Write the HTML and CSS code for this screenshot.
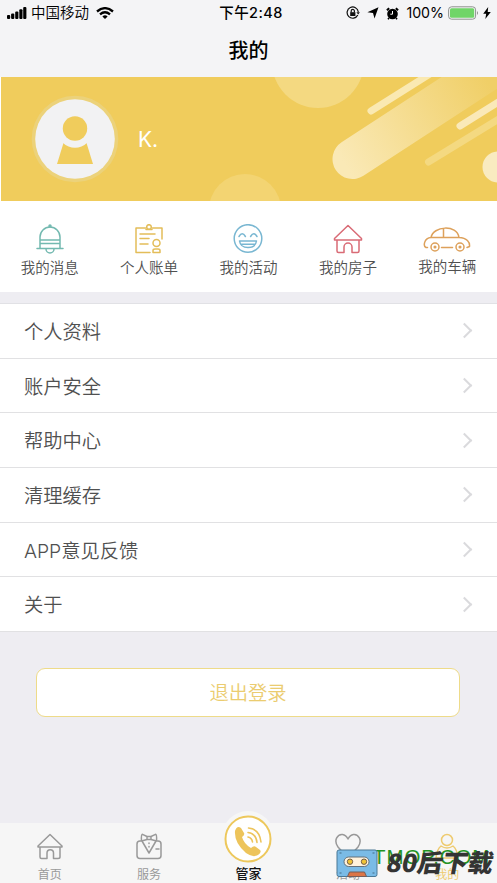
FILE: index.html
```html
<!DOCTYPE html>
<html lang="zh-CN">
<head>
<meta charset="utf-8">
<title>我的</title>
<link rel="stylesheet" href="styles.css">
</head>
<body>
<div class="app">
  <header class="top">
    <div class="status">
      <div class="status-left">
        <svg class="signal" width="20" height="12" viewBox="0 0 20 12"><rect x="0" y="8" width="3.2" height="4" rx="1"/><rect x="4.1" y="6.4" width="3.2" height="5.6" rx="1"/><rect x="8.2" y="4.4" width="3.2" height="7.6" rx="1"/><rect x="12.3" y="2.2" width="3.2" height="9.8" rx="1"/><rect x="16.2" y="0" width="3.2" height="12" rx="1"/></svg>
        <span class="carrier">中国移动</span>
        <svg class="wifi" width="18" height="12" viewBox="0 0 18 12" fill="none" stroke="#000" stroke-width="2.3"><path d="M1 4.500Q9-2.200 17 4.500M4 7.400Q9 3.200 14 7.400"/><path d="M6.400 9.400Q9 7.200 11.600 9.400L9 12Z" fill="#000" stroke="none"/></svg>
      </div>
      <span class="time">下午2:48</span>
      <div class="status-right">
        <svg width="14" height="14" viewBox="0 0 14 14" fill="none" stroke="#111" stroke-width="1.2"><path d="M11.800 9A5.600 5.600 0 1 1 12.300 6"/><path d="M10.400 6.200h3.500l-1.700 2.400z" fill="#111" stroke="none"/><rect x="4.200" y="6.200" width="5.200" height="3.800" fill="#111" stroke="none"/><path d="M5.200 6.500V5a1.600 1.600 0 0 1 3.200 0v1.500"/></svg>
        <svg width="12" height="12" viewBox="0 0 12 12"><path d="M11.500.3L7.500 11.500 6 6 .4 5.200Z"/></svg>
        <svg width="13" height="13" viewBox="0 0 13 13"><circle cx="6.500" cy="7" r="5.300"/><path d="M.9 3.200L3.200 1.200M12.100 3.200L9.800 1.200" stroke="#000" stroke-width="2"/><path d="M3 11l-1 1.300M10 11l1 1.300" stroke="#000" stroke-width="1.600"/><path d="M6.500 4v3.200H4.300" fill="none" stroke="#fff" stroke-width="1"/></svg>
        <span class="percent">100%</span>
        <svg class="battery" width="31" height="14" viewBox="0 0 31 14"><rect x=".6" y=".8" width="27" height="12.400" rx="3" fill="#f4f4f6" stroke="#8e918e"/><rect x="2" y="2.200" width="24.200" height="9.600" rx="1.500" fill="#70d568"/><path d="M29 5q2 2 0 4z" fill="#8e918e"/></svg>
        <svg class="bolt" width="8" height="12" viewBox="0 0 8 12"><path d="M5.200 0L.2 6.700h3L2.300 12 7.800 4.900H4.700Z"/></svg>
      </div>
    </div>
    <h1>我的</h1>
  </header>

  <section class="banner">
    <svg class="banner-art" width="496" height="124" viewBox="1 77 496 124">
      <defs><linearGradient id="beam" gradientUnits="userSpaceOnUse" x1="345" y1="165" x2="487" y2="80"><stop offset="0" stop-color="#fae9b6"/><stop offset="1" stop-color="#f0cf67"/></linearGradient></defs>
      <rect x="1" y="77" width="496" height="124" fill="#f0cc5c"/>
      <circle cx="318" cy="62" r="46" fill="#f4d981"/>
      <circle cx="245" cy="210" r="36" fill="#f3d472"/>
      <path d="M352.500 159L512 55" stroke="url(#beam)" stroke-width="40" stroke-linecap="round"/>
      <g fill="none" stroke-width="7" stroke-linecap="round"><path d="M371 111L433 72" stroke="#fae9b2"/><path d="M460 126L505 98" stroke="#fae9b8"/><path d="M428.500 162L507 114" stroke="#f4d981"/></g>
      <circle cx="498" cy="167" r="15.500" fill="#f9ebc0"/>
    </svg>
    <div class="profile">
      <svg class="avatar" width="88" height="88" viewBox="0 0 88 88"><circle cx="44" cy="44" r="43.300" fill="#ecd27a"/><circle cx="44" cy="44" r="39.800" fill="#f2f2f3"/><path d="M32.500 48H55.500L62 69H26Z" fill="#f0cc5c"/><circle cx="44" cy="36" r="16.800" fill="#f2f2f3"/><circle cx="44" cy="33.500" r="12.200" fill="#f0cc5c"/></svg>
      <span class="name">K.</span>
    </div>
  </section>

  <nav class="shortcuts">
    <a class="shortcut teal"><svg width="28" height="30" viewBox="0 0 28 30"><path d="M4 24V13a10 10 0 0 1 20 0v11M1 24.500h26M4 16h20M4 19.500h20M10 25a4 4 0 0 0 8 0"/><circle cx="14" cy="2" r="1"/></svg><span>我的消息</span></a>
    <a class="shortcut gold"><svg width="28" height="30" viewBox="0 0 28 30"><path d="M15 28.500H1V4H10.500M17.500 4H27v11M11 5.500h6M5 10h15M5 14.500h9M5 20h8M18 28.500v-2q0-1.500 2-1.500h3q2 0 2 1.500v2z"/><circle cx="14" cy="3" r="2.300"/><circle cx="21.500" cy="19" r="3.500"/></svg><span>个人账单</span></a>
    <a class="shortcut blue"><svg width="30" height="30" viewBox="0 0 30 30"><circle cx="15" cy="14.500" r="13.800"/><path d="M6 12.500q3.200-5.500 6.400 0M17.600 12.500q3.200-5.500 6.400 0M6.500 17h17q-1 6.500-8.500 6.500t-8.500-6.500zM8 20.300h14"/></svg><span>我的活动</span></a>
    <a class="shortcut red"><svg width="30" height="30" viewBox="0 0 30 30"><path d="M1.500 14.500L15 1.500l13.500 13v1.500h-27zM4 16v11q0 1.500 1.500 1.500H11V23a4 4 0 0 1 8 0v5.500h5.500q1.500 0 1.500-1.500V16"/></svg><span>我的房子</span></a>
    <a class="shortcut orange"><svg width="48" height="28" viewBox="0 0 48 28"><path d="M4.500 22.500H3C0 21 1 13 8 12.500H36C44 13 47 17 46.500 21.500L44 22.500M8 12.500C10 1 34-1 36 12.500M20.500 3.500v9M18.500 22.500h11"/><circle cx="12" cy="22" r="4"/><circle cx="37" cy="22" r="4"/><circle cx="12" cy="22" r=".8"/><circle cx="37" cy="22" r=".8"/></svg><span>我的车辆</span></a>
  </nav>

  <main class="menu">
    <a class="row">个人资料<i></i></a>
    <a class="row">账户安全<i></i></a>
    <a class="row">帮助中心<i></i></a>
    <a class="row">清理缓存<i></i></a>
    <a class="row">APP意见反馈<i></i></a>
    <a class="row">关于<i></i></a>
  </main>

  <button class="logout">退出登录</button>

  <footer class="tabs">
    <a class="tab"><svg width="26" height="27" viewBox="0 0 26 27"><path d="M1 13L13 1.500 25 13v1H1zM3 14v10q0 1.500 1.500 1.500H10V20a3 3 0 0 1 6.500 0v5.500H21q2 0 2-1.500V14"/></svg><span>首页</span></a>
    <a class="tab"><svg width="26" height="27" viewBox="0 0 26 27"><path d="M6 8H4q-3 0-3 3v11.500q0 3 3 3h18q3 0 3-3V11q0-3-3-3h-2M6 8l7 12 7-12M11 3.500L6.500 1.300Q5 1.500 5.500 8L11 6.500h4L20.500 8Q21 1.500 19.500 1.300L15 3.500zM11 3.500v3M15 3.500v3M20 16h3M13 10v.5M13 13.500v.5"/></svg><span>服务</span></a>
    <a class="tab center"><svg width="52" height="56" viewBox="0 0 52 56"><circle cx="26" cy="28" r="26" class="halo"/><circle cx="26" cy="30" r="22.500" class="ring"/><path class="phone" d="M13 22q2-6 6-3l3 5q1 2-2 4 2 7 9 11 3-3 5-1l4 3q2 2-2 5-5 3-12-2Q12 34 13 22z"/><path class="waves" d="M26 28q4 1 4.500 5M26 23.500q8 1 9 10M26.500 19q11 1 12.500 14"/></svg><span>管家</span></a>
    <a class="tab"><svg width="26" height="27" viewBox="0 0 26 27"><path d="M13 25L3 14C-2 7 3 1 7.500 1.500 11 2 12 4 13 6c1-2 2-4 5.500-4.500C23 1 28 7 23 14z"/></svg><span>活动</span></a>
    <a class="tab active"><svg width="26" height="27" viewBox="0 0 26 27"><circle cx="13" cy="7" r="5.500"/><path d="M7 13Q3 16 2 25h22q-1-9-5-12-6 4-12 0z"/></svg><span>我的</span></a>
  </footer>

  <div class="watermark">
    <span class="domain">TMOP.COM</span>
    <svg class="cassette" width="42" height="29" viewBox="0 0 42 29"><rect x="1" y="1" width="40" height="26.500" rx="2" fill="#7abbe6" stroke="#4b7895"/><rect x="8" y="8" width="25" height="9.500" rx="4.700" fill="#fff2dc" stroke="#64717a"/><circle cx="14" cy="12.700" r="2.700" fill="#f0c435" stroke="#735f4b"/><circle cx="28" cy="12.700" r="2.700" fill="#f0c435" stroke="#735f4b"/><path d="M13.500 23h15l2 4.500H11.500z" fill="#dc7547" stroke="#755f5b"/><path d="M3.500 4h2M36.500 4h2M3.500 24h2M36.500 24h2" stroke="#456c86"/></svg>
    <span class="brand">80后下载</span>
  </div>
</div>
</body>
</html>
```
FILE: styles.css
```css
* { box-sizing: border-box; }
body {
  margin: 0;
  font-family: Inter, "Noto Sans CJK SC", sans-serif;
  background: #eeedf2;
  color: #505050;
}
.app {
  position: relative;
  display: flex;
  flex-direction: column;
  width: 497px;
  height: 883px;
  overflow: hidden;
}
svg { display: block; flex: none; }
.top { height: 77px; background: #f4f4f6; color: #000; }
.status {
  display: grid;
  grid-template-columns: 1fr auto 1fr;
  align-items: center;
  height: 26px;
  padding: 0 6px 0 7px;
  font-size: 14.5px;
  line-height: 20px;
}
.status-left, .status-right { display: flex; align-items: center; }
.carrier { margin: 0 7px 0 4px; font-weight: 350; }
.time { margin-left: 4px; font-weight: 500; letter-spacing: .4px; }
.status-right { justify-content: flex-end; gap: 7px; }
.percent { margin-right: -3px; font-size: 14.2px; }
.bolt { margin-left: -3px; }
h1 {
  margin: 9.5px 0 0;
  font-size: 20px;
  line-height: 30px;
  font-weight: 500;
  text-align: center;
}
.banner { position: relative; height: 124px; padding-left: 1px; background: #fff; }
.banner-art { position: absolute; left: 1px; top: 0; }
.profile { position: relative; display: flex; align-items: center; height: 124px; padding: 0 0 0 30px; }
.name { margin: 1px 0 0 19px; font: 400 21px Inter, sans-serif; color: #fff; }
.shortcuts {
  display: grid;
  grid-template-columns: repeat(5, 1fr);
  height: 91px;
  padding-top: 23px;
  background: #fff;
}
.shortcut { display: flex; flex-direction: column; align-items: center; font-size: 14.5px; font-weight: 350; line-height: 22px; }
.shortcut span { margin-top: 3px; color: #505050; }
.shortcut svg, .tab svg { fill: none; stroke: currentColor; stroke-width: 1.5; stroke-linejoin: round; stroke-linecap: round; }
.teal { color: #73b9b0; }
.gold { color: #e3bd59; }
.blue { color: #79b7d2; }
.red { color: #d96b76; }
.orange { color: #dda15b; }
.orange svg { margin-top: 1px; }
.menu { margin-top: 11px; border-top: 1px solid #e1e1e5; background: #fff; }
.row {
  display: flex;
  align-items: center;
  justify-content: space-between;
  height: 54.7px;
  padding: 0 27px 0 24px;
  border-bottom: 1px solid #e1e1e3;
  font-size: 19.3px;
  font-weight: 350;
}
.row i { width: 11px; height: 11px; border: solid #dadadd; border-width: 2px 2px 0 0; transform: rotate(45deg); }
.logout {
  width: 424px;
  height: 49px;
  margin: 36px 0 0 36px;
  padding: 0 0 2px;
  border: 1.5px solid #eedb89;
  border-radius: 9px;
  background: #fff;
  color: #ebcc70;
  font: 350 19.3px "Noto Sans CJK SC", sans-serif;
}
.tabs {
  display: grid;
  grid-template-columns: repeat(5, 1fr);
  height: 60px;
  margin-top: auto;
  background: #f6f6f6;
}
.tab { display: flex; flex-direction: column; align-items: center; padding-top: 10px; color: #999; font-size: 12px; line-height: 18px; }
.tab span { margin-top: 6px; }
.tab.center { padding: 0; color: #111; font-size: 13px; font-weight: 500; }
.center svg { margin-top: -14px; }
.center span { margin-top: -1px; }
.tab .halo { fill: #f6f6f6; stroke: none; }
.tab .ring { fill: #fff; stroke: #edc85c; stroke-width: 2; }
.tab .phone { fill: #edc45b; stroke: none; }
.tab .waves { stroke: #edc45b; stroke-width: 1.6; }
.tab.active { color: #eecb70; }
.watermark { position: absolute; left: 336px; bottom: 5px; width: 161px; height: 30px; }
.domain { position: absolute; left: 37px; top: -2px; color: #239323; font: 20.5px/22px "Liberation Sans", sans-serif; letter-spacing: .9px; }
.cassette { position: absolute; left: 0; top: 1px; }
.brand {
  position: absolute;
  left: 51px;
  top: -1px;
  color: #343434;
  font: 900 24.5px/30px "Noto Sans CJK SC", sans-serif;
  white-space: nowrap;
  transform: scaleX(1.03) skewX(-10deg);
  transform-origin: 0 50%;
}
```
